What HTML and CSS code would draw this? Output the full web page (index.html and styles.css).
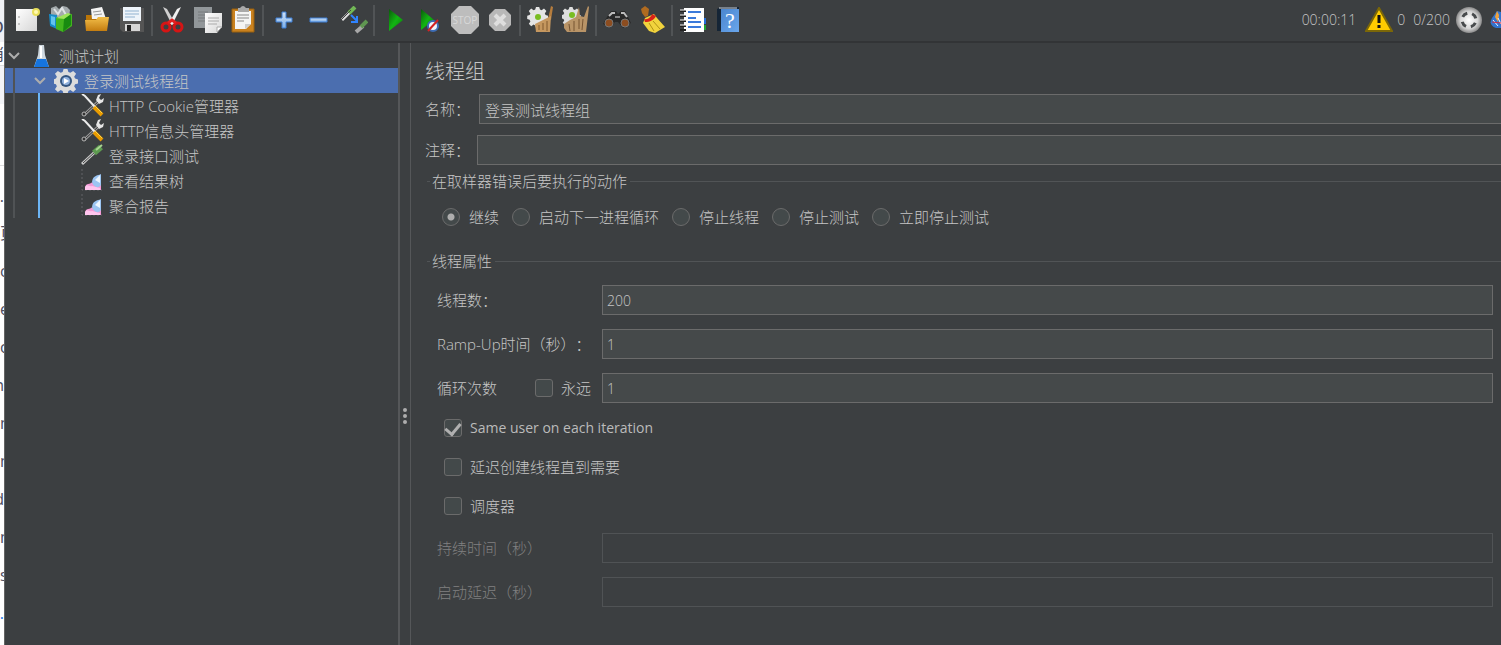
FILE: index.html
```html
<!DOCTYPE html>
<html lang="zh-CN">
<head>
<meta charset="utf-8">
<title>线程组</title>
<link rel="stylesheet" href="styles.css">
</head>
<body>
<svg class="defs" aria-hidden="true">
  <defs>
    <linearGradient id="paper" x2="1" y2="1"><stop stop-color="#fff"/><stop offset="1" stop-color="#d6d6d6"/></linearGradient>
    <linearGradient id="green" x2="1" y2="1"><stop stop-color="#0a5a0a"/><stop offset=".5" stop-color="#12b512"/><stop offset="1" stop-color="#0a7a0a"/></linearGradient>
    <linearGradient id="orange" x2="0" y2="1"><stop stop-color="#f3bf4a"/><stop offset="1" stop-color="#c47d10"/></linearGradient>
    <linearGradient id="sky" x2="0" y2="1"><stop stop-color="#cfe0f5"/><stop offset="1" stop-color="#7fb0e6"/></linearGradient>
    <linearGradient id="book" x2="1" y2="1"><stop stop-color="#4a86cf"/><stop offset="1" stop-color="#6aa6ec"/></linearGradient>
    <radialGradient id="ball"><stop stop-color="#fff"/><stop offset=".65" stop-color="#d8d8d8"/><stop offset="1" stop-color="#8a8a8a"/></radialGradient>
    <g id="gear">
      <path d="M10 0h4l1 3 2 1 3-2 3 3-2 3 1 2 3 1v4l-3 1-1 2 2 3-3 3-3-2-2 1-1 3h-4l-1-3-2-1-3 2-3-3 2-3-1-2-3-1v-4l3-1 1-2-2-3 3-3 3 2 2-1z"/>
    </g>
    <g id="tools">
      <path d="M3 21 19 6" stroke="#9b9b9b" stroke-width="3"/>
      <path d="M4 20 18 7" stroke="#333" stroke-width="1"/>
      <circle cx="3" cy="20" r="2" fill="#333" stroke="#b5b5b5"/>
      <path d="M15 6 17 1l3-1-2 4 2 2 3-2-1 4-4 2z" fill="#e6e6e6"/>
      <path d="M1 0 4 2 14 13" fill="none" stroke="#ececec" stroke-width="2"/>
      <path d="M13 13 21 21" stroke="#e99b00" stroke-width="4"/>
      <path d="M14 12 21 19" stroke="#ffd447" stroke-width="1"/>
    </g>
    <g id="chart">
      <path d="M1 0v21h20" fill="none" stroke="#626568" stroke-dasharray="2 2"/>
      <path d="M4 21c0-8 4-5 6-7 3-2 5 3 10 0v7z" fill="#f49ad6"/>
      <path d="M4 21v-3c2-4 4 0 7-1l8 2v2z" fill="#ffc5ee"/>
      <path d="M11 13c1-7 5-6 9-8v11c-2 4-8 2-9-3z" fill="#9cc5f2"/>
      <path d="M14 11 19 6v8z" fill="#edf6ff"/>
    </g>
  </defs>
</svg>
<div class="screen">
  <aside class="backdrop" aria-hidden="true">
    <span class="bit first">o</span><span class="bit second">消</span><span class="bit band"></span><span class="bit plain"></span><span class="bit dotrow">.</span>
    <span class="bit start">页</span><span class="bit start">c</span><span class="bit start">e</span><span class="bit start">o</span><span class="bit">n</span><span class="bit start">m</span><span class="bit start">m</span><span class="bit">d</span><span class="bit start">m</span><span class="bit start">s</span><span class="bit link">.</span>
  </aside>

  <div class="app">
    <header class="toolbar">
      <button aria-label="新建"><svg viewBox="0 0 28 28"><path d="M3 3h21v22H3z" fill="url(#paper)"/><path d="M5 11h2M5 18h2" stroke="#999"/><circle cx="23" cy="6" r="4" fill="#e8df5b"/><circle cx="23" cy="6" r="2" fill="#fff9b0"/></svg></button>
      <button aria-label="模板"><svg viewBox="0 0 28 28"><path d="M3 2 8 0l3 3 4-3 4 1 3 3-1 7H3z" fill="#a4aaad"/><path d="M6 3l4 5 4-6 4 7" fill="none" stroke="#dfe3e5" stroke-width="2"/><path d="M1 8 9 9v14l-7-3z" fill="#168cc8"/><path d="M3 10 7 11v9l-4-2z" fill="#62c3ef"/><path d="M8 12 16 10l8-2v12l-9 6-7-3z" fill="#43b51e"/><path d="M16 13 23 8v11l-8 7z" fill="#188a10"/><path d="m8 12 8 1 7-5-3-1z" fill="#9ee35a"/></svg></button>
      <button aria-label="打开"><svg viewBox="0 0 28 28"><path d="M3 9h8l2 3h11v10H3z" fill="#b97508"/><path d="M8 3 19 1l4 12H9z" fill="#f4f4f4"/><path d="M10 6l8-1M11 9l8-1" stroke="#999"/><path d="M2 14h11l2-3h11l-2 14H3z" fill="url(#orange)"/></svg></button>
      <button aria-label="保存"><svg viewBox="0 0 28 28"><path d="M2 2h24v24H5l-3-3z" fill="#555"/><path d="M5 1h18v14H5z" fill="#eef4fa"/><path d="M7 5h14M7 8h14M7 11h10" stroke="#91b2d0"/><path d="M7 18h15v7H7z" fill="#d5d5d5"/><path d="M9 19h4v6H9z" fill="#222"/></svg></button>
      <i class="sep"></i>
      <button aria-label="剪切"><svg viewBox="0 0 28 28"><path d="M4 1 8 3l8 14-3 2z" fill="#d0d0d0"/><path d="M22 1 18 3l-8 14 3 2z" fill="#f0f0f0"/><circle cx="7" cy="21" r="4" fill="none" stroke="#d51515" stroke-width="3"/><circle cx="19" cy="21" r="4" fill="none" stroke="#d51515" stroke-width="3"/><path d="M9 17 13 14l4 3" stroke="#e22020" stroke-width="3" fill="none"/></svg></button>
      <button aria-label="复制"><svg viewBox="0 0 28 28"><path d="M0 1h18v21H0z" fill="#92979a"/><path d="M4 6h10M4 9h10M4 12h10M4 15h8" stroke="#777b7d"/><path d="M11 7h17v14l-5 6H11z" fill="url(#paper)"/><path d="M14 12h11M14 15h11M14 18h9" stroke="#aaa"/><path d="M23 26v-5h5z" fill="#fff" stroke="#aaa"/></svg></button>
      <button aria-label="粘贴"><svg viewBox="0 0 28 28"><path d="M3 3h22v23H3z" fill="#c9811f" stroke="#99600e"/><path d="M6 5h16v13l-5 5H6z" fill="#f4f4f4"/><path d="M9 2h2q3-4 6 0h3v4H9z" fill="#a9a9a9"/><path d="M8 9h12M8 12h12M8 15h7" stroke="#888"/><path d="M16 23v-5h6z" fill="#ccc"/></svg></button>
      <i class="sep"></i>
      <button aria-label="全部展开"><svg viewBox="0 0 28 28"><path d="M12 6h4v6h6v4h-6v6h-4v-6H6v-4h6z" fill="url(#sky)" stroke="#3d7fd6"/></svg></button>
      <button aria-label="全部折叠"><svg viewBox="0 0 28 28"><path d="M5 12h17v4H5z" fill="url(#sky)" stroke="#3d7fd6"/></svg></button>
      <button aria-label="切换"><svg viewBox="0 0 28 28"><path d="M2 14 11 5" stroke="#ddd" stroke-width="3"/><path d="M9 7 15 1" stroke="#72b856" stroke-width="4"/><path d="M1 14 11 4" stroke="#444"/><path d="M11 9 17 15M17 10v6h-6" stroke="#2f83ff" stroke-width="2" fill="none"/><path d="M16 26 23 20" stroke="#a8a8a8" stroke-width="4"/><path d="M21 21 27 15" stroke="#5f9651" stroke-width="4"/></svg></button>
      <i class="sep"></i>
      <button aria-label="启动"><svg viewBox="0 0 28 28"><path d="M8 3 22 14 8 25z" fill="url(#green)"/></svg></button>
      <button aria-label="不停顿开始"><svg viewBox="0 0 28 28"><path d="M5 3 18 14 5 24z" fill="url(#green)"/><circle cx="17" cy="20" r="5" fill="#f1f4fa" stroke="#3d6db5" stroke-width="2"/><path d="M12 25 22 14" stroke="#d32222" stroke-width="2"/></svg></button>
      <button aria-label="停止"><svg viewBox="0 0 28 28"><path d="M8 0h12l8 8v12l-8 8H8l-8-8V8z" fill="#bdbdbd"/><text x="14" y="18" class="stop-text">STOP</text></svg></button>
      <button aria-label="关闭"><svg viewBox="0 0 28 28"><path d="M9 3h10l6 6v10l-6 6H9l-6-6V9z" fill="#b8b8b8"/><path d="M9 9l10 10M19 9l-10 10" stroke="#dedede" stroke-width="4"/></svg></button>
      <i class="sep"></i>
      <button aria-label="清除"><svg viewBox="0 0 28 28"><use href="#gear" transform="translate(1 1) scale(.8)" fill="#e4e4e4"/><circle cx="11" cy="11" r="3" fill="#79bd22"/><path d="M21 13 24 0l2 1-2 13z" fill="#b67d3d"/><path d="M16 14 24 10l-1 16H9l-1-8z" fill="#c5975f"/><path d="M12 19v5M16 17v7M20 15v10" stroke="#80592f"/></svg></button>
      <button aria-label="清除全部"><svg viewBox="0 0 28 28"><use href="#gear" transform="translate(0 1) scale(.75)" fill="#dedede"/><circle cx="10" cy="9" r="3" fill="#79bd22"/><path d="M2 18 8 14 14 11 17 1l1 9 4 1L26 0l1 1-3 25H5l-3-4z" fill="#b99467"/><path d="M7 18l1 7M12 15v10M17 13v10M21 13l-1 11" stroke="#765432"/></svg></button>
      <i class="sep"></i>
      <button aria-label="查找"><svg viewBox="0 0 28 28"><path d="M4 11 8 5h5l2 3 3-3h4l3 6 3 6-8 5-5-6h-3l-4 5-8-3z" fill="#282828"/><path d="M6 10 9 7h3M18 7h3l3 4" stroke="#bbb" stroke-width="2" fill="none"/><circle cx="6" cy="17" r="4" fill="#8d4d20" stroke="#777" stroke-width="1"/><circle cx="22" cy="17" r="4" fill="#8d4d20" stroke="#777"/><path d="M12 11h5" stroke="#888" stroke-width="2"/></svg></button>
      <button aria-label="重置查找"><svg viewBox="0 0 28 28"><path d="M3 3 7 0l4 3-1 7-3 1-3-4z" fill="#b06b20"/><path d="M7 12 16 8l3 4 8 9-10 6-6-2-6-8z" fill="#f1d33d"/><path d="M6 13c4 1 7-2 8-5l4 2c-2 4-6 6-11 6z" fill="#d92218"/><path d="M11 17l5 8M15 15l7 8" stroke="#b19214"/></svg></button>
      <i class="sep"></i>
      <button aria-label="函数助手"><svg viewBox="0 0 28 28"><path d="M22 12h5v6h-5z" fill="#2670d9"/><path d="M22 19h5v5h-5z" fill="#1ca334"/><path d="M5 2h20v24H5z" fill="#fff"/><path d="M9 6h13M9 12h8M9 16h13M9 21h13" stroke="#3b7ada" stroke-width="2"/><path d="M1 5h6M1 10h6M1 15h6M1 20h6M1 24h6" stroke="#222" stroke-width="2"/><path d="M1 4h6M1 9h6M1 14h6M1 19h6" stroke="#fff"/></svg></button>
      <button aria-label="帮助"><svg viewBox="0 0 28 28"><path d="M3 3 7 1h18v24H3z" fill="#152536"/><path d="M7 3h18v23H7z" fill="url(#book)"/><path d="M5 2h18" stroke="#ddd"/><text x="16" y="22" class="help-text">?</text></svg></button>
      <div class="status">
        <span>00:00:11</span>
        <svg class="warning" viewBox="0 0 28 26"><path d="M14 1 27 24H1z" fill="#ffcb00" stroke="#7b6708" stroke-width="2"/><path d="M14 8v8M14 18v3" stroke="#111" stroke-width="3"/></svg>
        <span class="errors">0</span>
        <span>0/200</span>
        <svg class="remote" viewBox="0 0 28 28"><circle cx="14" cy="14" r="13" fill="url(#ball)"/><circle cx="14" cy="14" r="7" fill="none" stroke="#484b4d" stroke-width="3" stroke-dasharray="6 5" stroke-dashoffset="-3"/></svg>
        <svg class="feather" viewBox="0 0 11 24"><path d="M2 10 7 3l4 1v16H6q-8-3-4-10" fill="#3274ce"/><path d="M5 9 7 3l2 4-1 7z" fill="#f0a23b"/><path d="M3 12 8 18M8 10l3 6" stroke="#eef5ff"/><path d="M2 14l9 1" stroke="#d02d40"/></svg>
      </div>
    </header>

    <div class="workspace">
      <nav class="tree" aria-label="测试计划">
        <a class="node root" href="#plan"><svg class="arrow" viewBox="0 0 12 8"><path d="m1 1 5 5 5-5"/></svg><svg class="icon" viewBox="0 0 24 24"><path d="M10 1h5l1 10 4 12H5l4-12z" fill="#cfd8df"/><path d="M8 15h9l3 8H5z" fill="#1674df"/><path d="M12 2v12" stroke="#fff" stroke-width="2"/></svg>测试计划</a>
        <div class="branch">
          <a class="node group" href="#group" aria-current="page"><svg class="arrow" viewBox="0 0 12 8"><path d="m1 1 5 5 5-5"/></svg><svg class="icon" viewBox="0 0 24 24"><use href="#gear" transform="scale(.96)" fill="#dcdcdc"/><circle cx="12" cy="12" r="6" fill="#34557f"/><circle cx="12" cy="12" r="4" fill="#8fb0dc"/><path d="m10 9 5 3-5 3z" fill="#fff"/></svg>登录测试线程组</a>
          <div class="leaves">
            <a class="node" href="#cookie"><svg class="icon" viewBox="0 0 24 24"><use href="#tools"/></svg>HTTP Cookie管理器</a>
            <a class="node" href="#header"><svg class="icon" viewBox="0 0 24 24"><use href="#tools"/></svg>HTTP信息头管理器</a>
            <a class="node" href="#request"><svg class="icon" viewBox="0 0 24 24"><path d="M1 20 15 7" stroke="#ccc" stroke-width="3"/><path d="M2 19 14 8" stroke="#444"/><path d="M13 9 20 3" stroke="#5d9a50" stroke-width="6"/><path d="M15 6 21 1" stroke="#a8d591" stroke-width="2"/></svg>登录接口测试</a>
            <a class="node" href="#results"><svg class="icon" viewBox="0 0 24 24"><use href="#chart"/></svg>查看结果树</a>
            <a class="node" href="#report"><svg class="icon" viewBox="0 0 24 24"><use href="#chart"/></svg>聚合报告</a>
          </div>
        </div>
      </nav>
      <div class="splitter"><i></i><i></i><i></i></div>

      <main class="editor">
        <h1>线程组</h1>
        <div class="field name"><label for="name">名称：</label><input id="name" type="text" value="登录测试线程组"></div>
        <div class="field comment"><label for="comment">注释：</label><input id="comment" type="text"></div>
        <fieldset class="actions">
          <legend>在取样器错误后要执行的动作</legend>
          <div class="radios">
            <label><input type="radio" name="action" checked>继续</label>
            <label><input type="radio" name="action">启动下一进程循环</label>
            <label><input type="radio" name="action">停止线程</label>
            <label><input type="radio" name="action">停止测试</label>
            <label><input type="radio" name="action">立即停止测试</label>
          </div>
        </fieldset>
        <fieldset class="properties">
          <legend>线程属性</legend>
          <div class="rows">
            <div class="row"><label for="threads">线程数：</label><input id="threads" type="text" value="200"></div>
            <div class="row"><label for="ramp">Ramp-Up时间（秒）：</label><input id="ramp" type="text" value="1"></div>
            <div class="row"><div class="loop"><label for="loops">循环次数</label><label class="check"><input type="checkbox">永远</label></div><input id="loops" type="text" value="1"></div>
          </div>
          <div class="checks">
            <label class="check latin"><input type="checkbox" checked>Same user on each iteration</label>
            <label class="check"><input type="checkbox">延迟创建线程直到需要</label>
            <label class="check"><input type="checkbox">调度器</label>
          </div>
          <div class="rows">
            <div class="row off"><label for="duration">持续时间（秒）</label><input id="duration" type="text" disabled></div>
            <div class="row off"><label for="delay">启动延迟（秒）</label><input id="delay" type="text" disabled></div>
          </div>
        </fieldset>
      </main>
    </div>
  </div>
</div>
</body>
</html>
```
FILE: styles.css
```css
* { box-sizing: border-box; }
body {
  margin: 0;
  background: #3c3f41;
  color: #c6c6c6;
  font: 300 15px/22px "Open Sans", "Noto Sans CJK SC", sans-serif;
  text-spacing-trim: space-all;
}
button, input { font: inherit; color: inherit; margin: 0; }
a { color: inherit; text-decoration: none; }
svg { display: block; flex: none; }
.defs { position: absolute; width: 0; height: 0; }

.screen { display: flex; height: 100vh; overflow: hidden; }

.backdrop {
  display: flex;
  flex-direction: column;
  flex: none;
  width: 4px;
  overflow: hidden;
  background: #fff;
  color: #4d4d5f;
  font-size: 16px;
  font-weight: 400;
}
.bit { display: flex; flex: none; align-items: center; justify-content: flex-end; height: 38px; white-space: nowrap; }
.bit.start { justify-content: flex-start; }
.bit.first { height: 42px; padding-top: 6px; font-size: 22px; background: #f0f1f5; }
.bit.second { height: 24px; border-bottom: 1px solid #ddd; }
.bit.band { height: 38px; background: #f3f4f7; }
.bit.plain { height: 62px; border-bottom: 1px solid #ddd; }
.bit.dotrow { height: 48px; padding-top: 12px; }
.bit.link { color: #1a73e8; }

.app {
  display: flex;
  flex-direction: column;
  flex: 1;
  min-width: 0;
  border-left: 1px solid #646464;
}

.toolbar {
  display: flex;
  flex: none;
  align-items: center;
  height: 43px;
  padding: 0 0 1px 4px;
  border-bottom: 2px solid #323436;
}
.toolbar button {
  display: flex;
  flex: none;
  justify-content: center;
  width: 35px;
  padding: 0;
  border: 0;
  background: none;
}
.toolbar button svg { width: 28px; height: 28px; }
.sep { flex: none; width: 2px; height: 31px; margin: 0 2px; background: #515456; }
.stop-text { font: 10px "Open Sans", sans-serif; fill: #d8d8d8; text-anchor: middle; }
.help-text { font: 22px "Liberation Serif", serif; fill: #fff; text-anchor: middle; }
.status { display: flex; align-items: center; margin-left: auto; font-size: 14px; }
.warning { width: 28px; height: 26px; margin: 0 4px 0 9px; }
.errors { margin-right: 8px; }
.remote { width: 28px; height: 28px; margin: 0 7px 0 5px; }
.feather { width: 11px; height: 24px; }

.workspace { display: flex; flex: 1; min-height: 0; }
.tree { flex: none; width: 393px; white-space: nowrap; }
.node { display: flex; align-items: center; height: 25px; }
.root { padding-left: 3px; }
.arrow { width: 12px; height: 8px; margin-right: 9px; fill: none; stroke: #adadad; stroke-width: 2; }
.icon { width: 24px; height: 24px; margin-right: 6px; }
.branch { background: linear-gradient(#505355, #505355) 8px 0 / 2px 100% no-repeat; }
.group { padding-left: 29px; background: linear-gradient(#505355, #505355) 8px 0 / 2px 100% no-repeat #4b6eaf; }
.branch .group .arrow { margin-right: 8px; }
.leaves { margin-left: 33px; padding-left: 41px; border-left: 2px solid #6cb5f5; }
.leaves .icon { margin-right: 4px; }

.splitter {
  display: flex;
  flex: none;
  flex-direction: column;
  align-items: center;
  justify-content: center;
  gap: 2px;
  width: 13px;
  padding-top: 144px;
  border: solid #555759;
  border-width: 0 1px 0 2px;
}
.splitter i { width: 4px; height: 4px; border-radius: 2px; background: #adadad; }

.editor { flex: 1; min-width: 0; padding: 15px 0 0 14px; }
h1 { margin: 0 0 8px; font-size: 20px; font-weight: 300; line-height: 28px; }
.field { display: flex; align-items: center; margin-bottom: 11px; }
.field label { flex: none; width: 54px; }
.comment { margin-bottom: 5px; }
.comment label { width: 52px; }
input[type="text"] {
  flex: 1;
  min-width: 0;
  height: 30px;
  padding: 0 5px;
  border: 1px solid #6b6b6b;
  border-radius: 0;
  outline: 0;
  background: #45494a;
}
.field input[type="text"] { border-right: 0; }
.row input[type="text"] { padding: 0 4px; font-size: 14px; }

fieldset { min-width: 0; margin: 0 0 0 2px; padding: 0; border: 0 solid #515456; border-top-width: 1px; }
legend { margin-left: 3px; padding: 0 3px 0 2px; height: 22px; }
.radios { display: flex; gap: 13px; padding: 14px 0 0 15px; }
.radios label { display: flex; align-items: center; gap: 9px; }
input[type="radio"], input[type="checkbox"] {
  appearance: none;
  flex: none;
  width: 18px;
  height: 18px;
  border: 1px solid #6b6b6b;
  background: #43494a;
}
input[type="radio"] { border-radius: 50%; }
input[type="radio"]:checked { background: radial-gradient(circle, #adadad 3px, #43494a 4px); }
input[type="checkbox"] { border-radius: 3px; }
input[type="checkbox"]:checked { display: grid; place-items: center; }
input[type="checkbox"]:checked::before {
  content: "";
  width: 7px;
  height: 12px;
  margin-bottom: 3px;
  border: solid #b0b0b0;
  border-width: 0 3px 3px 0;
  transform: rotate(40deg);
}
.properties { margin-top: 22px; }
.rows { display: grid; gap: 14px; padding: 13px 8px 0 10px; }
.row { display: grid; grid-template-columns: 165px 1fr; align-items: center; }
.loop { display: flex; justify-content: space-between; padding-right: 11px; }
.check { display: flex; align-items: center; gap: 8px; }
.latin { font-size: 14px; font-weight: 400; color: #bbb; }
.checks { display: grid; grid-auto-rows: 39px; padding: 5px 0 0 17px; }
.checks + .rows { padding-top: 8px; }
.off { color: #808080; }
.off input[type="text"] { background: none; border-color: #505355; }
```
